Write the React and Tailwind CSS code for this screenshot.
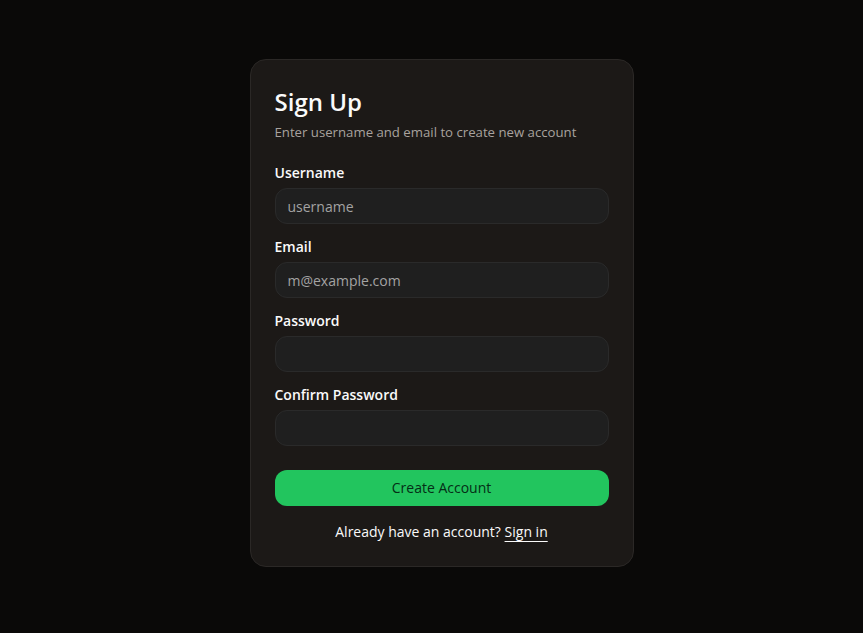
import React from "react";

function Field({ label, type = "text", placeholder }) {
  return (
    <div className="flex flex-col gap-2">
      <label className="text-sm font-semibold leading-[14px] text-[#fafafa]">{label}</label>
      <input
        type={type}
        placeholder={placeholder}
        className="h-9 w-full rounded-xl border border-[#2a2a2a] bg-[#1f1f1f] px-3 text-sm text-[#fafafa] placeholder:text-[#a3a3a3] outline-none"
      />
    </div>
  );
}

export default function App() {
  return (
    <div
      className="flex min-h-screen items-start justify-center bg-[#0a0908] pt-[59px] pl-5"
      style={{ fontFamily: '"Open Sans", "Noto Sans", sans-serif' }}
    >
      <div className="w-[384px] rounded-2xl border border-[#2b2826] bg-[#1c1917] px-6 pt-[26px] pb-6">
        {/* Header */}
        <h1 className="text-2xl leading-8 font-semibold text-[#fafafa]">Sign Up</h1>
        <p className="mt-1 text-[13.2px] leading-5 text-[#a8a29e]">
          Enter username and email to create new account
        </p>

        {/* Fields */}
        <div className="mt-6 flex flex-col gap-4">
          <Field label="Username" placeholder="username" />
          <Field label="Email" type="email" placeholder="m@example.com" />
          <Field label="Password" type="password" />
          <Field label="Confirm Password" type="password" />
        </div>

        <button className="mt-6 h-9 w-full rounded-xl bg-[#22c55e] text-sm font-medium text-[#052e16]">
          Create Account
        </button>

        <p className="mt-4 text-center text-sm leading-5 text-[#fafafa]">
          Already have an account?{" "}
          <a href="#" className="underline underline-offset-4">
            Sign in
          </a>
        </p>
      </div>
    </div>
  );
}
